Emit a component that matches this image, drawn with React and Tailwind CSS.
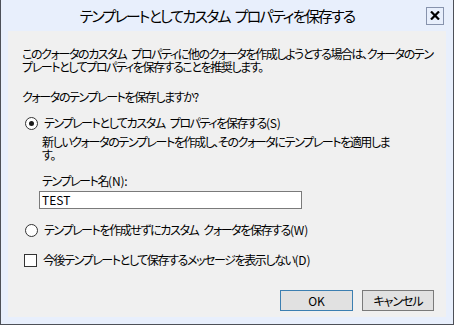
import React from 'react';

const font = "font-['Noto_Sans_CJK_JP',sans-serif] [font-feature-settings:'palt']";

const Sp = () => <span className="inline-block w-[5px]" />;
const Latin = ({ children }) => <span className="tracking-[-0.2px]">{children}</span>;

const Radio = ({ checked }) => (
  <span className="w-[13px] h-[13px] rounded-full border border-[#333333] bg-white flex items-center justify-center shrink-0">
    {checked && <span className="w-[5px] h-[5px] rounded-full bg-[#1a1a1a]" />}
  </span>
);

export default function App() {
  return (
    <div className={`w-[454px] h-[325px] bg-[#e8effc] border-x border-b border-[#4d5058] flex flex-col text-black ${font}`}>
      {/* タイトルバー */}
      <div className="h-[31px] flex items-center pl-[7px] pr-[9px]">
        <div className="flex-1 text-center text-[15px] leading-[20px] tracking-[-1.8px] pt-[1px] whitespace-nowrap">
          テンプレートとしてカスタム<Sp />プロパティを保存する
        </div>
        <div className="w-[18px] h-[18px] border border-[#8793ad] flex items-center justify-center">
          <svg width="10" height="9" viewBox="0 0 10 9">
            <path d="M1 0.5 L9 8.5 M9 0.5 L1 8.5" stroke="#000" strokeWidth="2.2" />
          </svg>
        </div>
      </div>

      {/* 本体 */}
      <div className="mx-[7px] h-[286px] bg-[#f0f0f0] flex flex-col text-[12px] tracking-[-1.4px]">
        <p className="pl-[14px] pt-[16px] leading-[13px] whitespace-nowrap">
          このクォータのカスタム<Sp />プロパティに他のクォータを作成しようとする場合は、クォータのテン
          <br />
          プレートとしてプロパティを保存することを推奨します。
        </p>

        <p className="pl-[14px] mt-[17px] leading-[14px]">クォータのテンプレートを保存しますか<Latin>?</Latin></p>

        <label className="mt-[12px] pl-[17px] h-[14px] flex items-center gap-[6px] whitespace-nowrap">
          <Radio checked />
          <span>テンプレートとしてカスタム<Sp />プロパティを保存する<Latin>(S)</Latin></span>
        </label>

        <p className="mt-[5px] pl-[34px] leading-[13px] whitespace-nowrap">
          新しいクォータのテンプレートを作成し、そのクォータにテンプレートを適用しま
          <br />
          す。
        </p>

        <p className="mt-[13px] pl-[34px] leading-[14px]">テンプレート名<Latin>(N):</Latin></p>
        <div className="mt-[3px] ml-[31px] w-[263px] h-[18px] border border-[#7a7a7a] bg-white flex items-center pl-[2px] leading-[14px] tracking-normal">
          TEST
        </div>

        <label className="mt-[14px] pl-[17px] h-[14px] flex items-center gap-[6px] whitespace-nowrap">
          <Radio />
          <span>テンプレートを作成せずにカスタム<Sp />クォータを保存する<Latin>(W)</Latin></span>
        </label>

        <label className="mt-[16px] pl-[16px] h-[14px] flex items-center gap-[6px] whitespace-nowrap">
          <span className="w-[13px] h-[13px] border border-[#333333] bg-white shrink-0" />
          <span>今後テンプレートとして保存するメッセージを表示しない<Latin>(D)</Latin></span>
        </label>

        <div className="mt-[23px] flex justify-end gap-[9px] pr-[12px] tracking-normal">
          <button className="w-[73px] h-[21px] bg-[#e1e1e1] border border-[#3c7fb1] leading-[14px]">OK</button>
          <button className="w-[72px] h-[21px] bg-[#e1e1e1] border border-[#7a7a7a] leading-[14px] tracking-[-1px]">キャンセル</button>
        </div>
      </div>
    </div>
  );
}
